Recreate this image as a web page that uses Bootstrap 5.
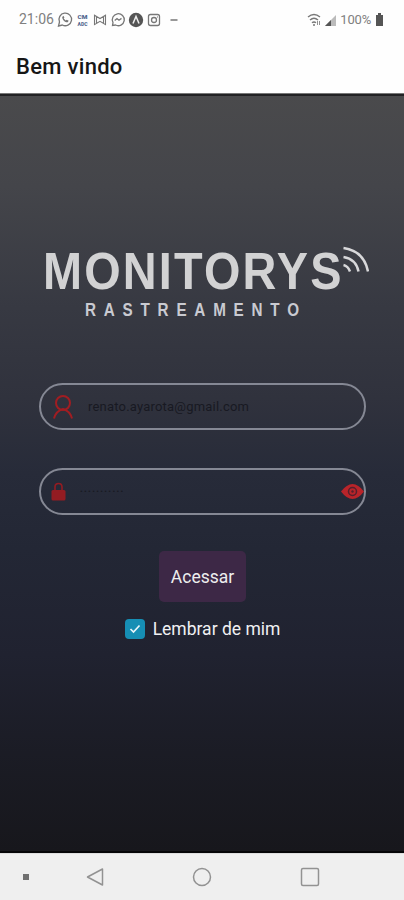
<!DOCTYPE html>
<html lang="pt-BR">
<head>
<meta charset="utf-8">
<meta name="viewport" content="width=device-width, initial-scale=1">
<title>Bem vindo</title>
<link href="https://cdn.jsdelivr.net/npm/bootstrap@5.3.0/dist/css/bootstrap.min.css" rel="stylesheet">
<style>
body{font-family:Roboto,sans-serif;height:900px;background:#fefefe;overflow:hidden}
.status{height:38px;padding:1px 20px 0 19px;color:#808080;font-size:14px}
.status svg,.pill svg,.sysnav svg{display:block;flex:none}
.hundred{font-size:13px;letter-spacing:-.2px;margin-left:2px}
.appbar{height:56px;padding:2px 16px 0;font-size:22px;font-weight:500;color:#161616;letter-spacing:.3px;border-bottom:1px solid #777}
.screen{height:759px;border-top:2px solid #222224;border-bottom:2px solid #050507;background:linear-gradient(#4a4a4c 0%,#44454a 12%,#373942 28%,#30323d 40%,#272b39 50%,#232735 60%,#202230 74%,#1b1c25 87%,#17171c 100%);padding:145px 38px 0 39px}
.brand{display:block;width:330px;height:84px}
.pill{height:47px;border:2px solid #858894;border-radius:24px;width:327px}
.pill input{background:none;border:0;padding:0;outline:0;color:#181922;min-width:0;font-size:13px;line-height:20px}
.user{margin-top:58px;padding-left:12px}
.user input{margin-left:15px;letter-spacing:.2px}
.pass{margin-top:38px;padding-left:10px}
.pass input{margin-left:14px;font-size:8px;letter-spacing:1.35px}
.enter{width:87px;height:51px;background:#3d2846;color:#eee;border:0;border-radius:5px;font-size:17.5px;padding:2px 0 0;margin-top:36px}
.enter:hover{background:#3d2846;color:#eee}
.remember{margin-top:17px;gap:8px;color:#f0f0f2;font-size:17.500px;line-height:20px}
.tick{width:20px;height:20px;border-radius:4px;background:#168eb4}
.sysnav{height:47px;background:#efefef;border-top:1px solid #ddd;padding:0 84px 0 23px}
.sysnav .back{margin-left:57px;margin-right:88px}
</style>
<script src="https://cdn.jsdelivr.net/npm/bootstrap@5.3.0/dist/js/bootstrap.bundle.min.js"></script>
</head>
<body class="d-flex flex-column m-0">
<header>
<div class="status d-flex align-items-center">
<span>21:06</span>
<svg width="126" height="18" viewBox="-3 0 126 18" fill="none" stroke="#777" stroke-width="1.3">
<path d="M1.500 15l1-4A6.300 6.300 0 1 1 5.300 14z"/><path d="M5.200 6c0 3 3 5.500 5.500 5.300l1-1.500-2-1-1 .8-2-2 .7-1-1-1.800z" fill="#777" stroke="none"/>
<g fill="#53688f" stroke="none" font-family="Roboto" font-weight="900" font-size="6"><text x="20.500" y="8" textLength="10" lengthAdjust="spacingAndGlyphs">CM</text><text x="20.500" y="15" textLength="10" lengthAdjust="spacingAndGlyphs">ADC</text></g>
<path d="M37.500 13.500V4.200l5.500 3.300 5.500-3.300v9.300L43 10.300zM39.500 5.500v7M46.500 5.500v7" stroke-width="1.100"/>
<path d="M55.500 14.500l.5-3A6 6 0 1 1 58.500 14z"/><path d="M57.700 9.500l2.300-2 2 1.700 2.500-1.800"/>
<circle cx="79" cy="9" r="7.200" fill="#555" stroke="none"/><path d="M76 12.500l3-7 3 7" stroke="#eee" stroke-width="1.500"/>
<rect x="91.500" y="3.500" width="11" height="11" rx="2"/><circle cx="97" cy="9" r="2.500"/><path d="M100 6h.7M113.500 9h7"/>
</svg>
<span class="ms-auto d-flex align-items-center">
<svg width="31" height="18" viewBox="0 0 31 18" fill="none" stroke="#777" stroke-width="1.400"><path d="M1 6q6-5 12 0M3 9q4-3.500 8 0M5 11.800q2-1.600 4 0"/><circle cx="7" cy="14" r="1" fill="#777" stroke="none"/><path d="M10.500 10v4M12.500 10v4" stroke-width=".8"/><path d="M18 15L29 4v11z" fill="#bbb" stroke="none"/><path d="M18 15l6-6v6z" fill="#555" stroke="none"/></svg>
<span class="hundred">100%</span>
<svg class="ms-1" width="9" height="18" viewBox="0 0 9 18"><path d="M1 4h2V2h3v2h2v11H1z" fill="#555"/></svg>
</span>
</div>
<div class="appbar d-flex align-items-center">Bem vindo</div>
</header>
<main class="screen">
<svg class="brand" viewBox="0 0 330 84" role="img" aria-label="Monitorys Rastreamento">
<g font-family="Liberation Sans,sans-serif" font-weight="bold"><text transform="translate(4 47.500) scale(.91 1)" font-size="51.500" fill="#d2d2d3" textLength="328" lengthAdjust="spacing">MONITORYS</text><text transform="translate(46 75) scale(.87 1)" font-size="17.500" fill="#c9cad1" textLength="246">RASTREAMENTO</text></g>
<g fill="none" stroke="#d8d8da" stroke-width="2.500"><path d="M304.500 7Q325 10 329 30.500M304.500 16Q317 18 319.500 30.500M304.500 24Q309 25 311 30.500"/></g>
</svg>
<form class="d-flex flex-column align-items-center" onsubmit="return false">
<div class="pill user d-flex align-items-center"><svg width="20" height="24" viewBox="0 0 20 24" fill="none" stroke="#a11d22" stroke-width="2"><circle cx="10" cy="8" r="7"/><path d="M1 23.500Q3 16 10 14Q17 16 19 23.500"/></svg><input class="flex-grow-1" type="text" value="renato.ayarota@gmail.com" aria-label="E-mail"></div>
<div class="pill pass d-flex align-items-center"><svg width="15" height="19" viewBox="0 0 15 19"><path d="M4 9V5q0-3.500 3.500-3.500T11 5v4" fill="none" stroke="#941c22" stroke-width="1.600"/><rect x=".5" y="8" width="14" height="10.500" rx="1.500" fill="#941c22"/></svg><input class="flex-grow-1" type="text" value="•••••••••••" aria-label="Senha"><svg width="23" height="17" viewBox="0 0 23 17"><path d="M0 8.500Q11.500-6.500 23 8.500Q11.500 23.500 0 8.500" fill="#b9242a"/><circle cx="11.500" cy="8.500" r="4" fill="none" stroke="#55202c" stroke-width="1.500"/><circle cx="11.500" cy="8.500" r="1.200" fill="#55202c"/></svg></div>
<button class="btn enter" type="submit">Acessar</button>
<label class="remember d-flex align-items-center"><span class="tick d-flex"><svg width="20" height="20" viewBox="0 0 20 20"><path d="M5.500 10l3 3 6-6.500" fill="none" stroke="#e8f5fa" stroke-width="1.700"/></svg></span>Lembrar de mim</label>
</form>
</main>
<nav class="sysnav d-flex align-items-center">
<svg width="6" height="6"><path d="M0 0h6v6H0z" fill="#707070"/></svg>
<svg class="back" width="18" height="20" viewBox="0 0 18 20" fill="none" stroke="#929292" stroke-width="1.500"><path d="M16.500 2v16L1.500 10z" stroke-linejoin="round"/></svg>
<svg width="20" height="20" fill="none" stroke="#929292" stroke-width="1.500"><circle cx="10" cy="10" r="8.500"/></svg>
<svg class="ms-auto" width="20" height="20" fill="none" stroke="#929292" stroke-width="1.500"><rect x="1.500" y="1.500" width="17" height="17" rx="1.500"/></svg>
</nav>
</body>
</html>
